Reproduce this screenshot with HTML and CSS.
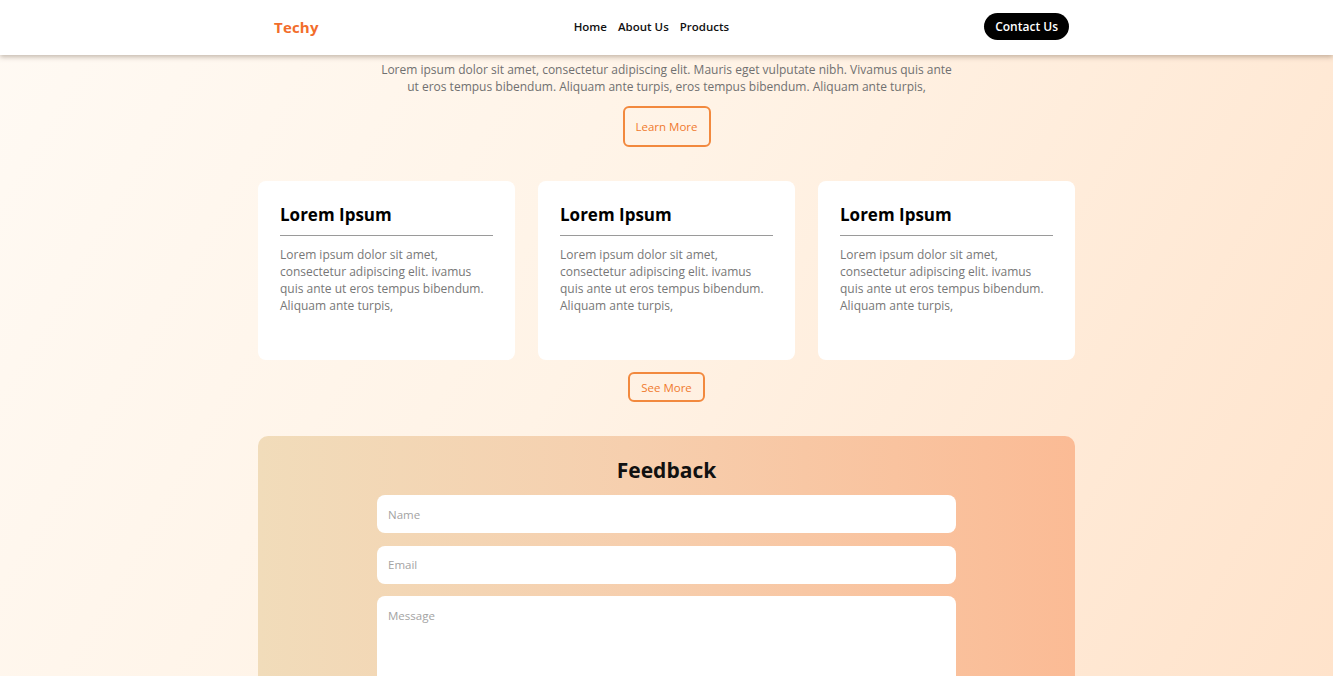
FILE: index.html
```html
<!DOCTYPE html>
<html lang="en">
<head>
<meta charset="utf-8">
<title>Techy</title>
<link rel="stylesheet" href="styles.css">
</head>
<body>
<header class="site-header">
  <div class="header-inner">
    <a class="logo" href="#">Techy</a>
    <nav class="nav">
      <a href="#">Home</a>
      <a href="#">About Us</a>
      <a href="#">Products</a>
    </nav>
    <a class="contact-btn" href="#">Contact Us</a>
  </div>
</header>
<main class="main">
  <section class="hero">
    <p class="hero-text">Lorem ipsum dolor sit amet, consectetur adipiscing elit. Mauris eget vulputate nibh. Vivamus quis ante ut eros tempus bibendum. Aliquam ante turpis, eros tempus bibendum. Aliquam ante turpis,</p>
    <a class="btn-outline btn-learn" href="#">Learn More</a>
  </section>
  <section class="cards">
    <article class="card">
      <h3 class="card-title">Lorem Ipsum</h3>
      <p class="card-text">Lorem ipsum dolor sit amet, consectetur adipiscing elit. ivamus quis ante ut eros tempus bibendum. Aliquam ante turpis,</p>
    </article>
    <article class="card">
      <h3 class="card-title">Lorem Ipsum</h3>
      <p class="card-text">Lorem ipsum dolor sit amet, consectetur adipiscing elit. ivamus quis ante ut eros tempus bibendum. Aliquam ante turpis,</p>
    </article>
    <article class="card">
      <h3 class="card-title">Lorem Ipsum</h3>
      <p class="card-text">Lorem ipsum dolor sit amet, consectetur adipiscing elit. ivamus quis ante ut eros tempus bibendum. Aliquam ante turpis,</p>
    </article>
  </section>
  <div class="see-more-row">
    <a class="btn-outline btn-see" href="#">See More</a>
  </div>
  <section class="feedback">
    <h2 class="feedback-title">Feedback</h2>
    <form class="feedback-form">
      <input class="field" type="text" placeholder="Name">
      <input class="field" type="email" placeholder="Email">
      <textarea class="field field-msg" placeholder="Message"></textarea>
    </form>
  </section>
</main>
</body>
</html>
```

FILE: styles.css
```css
* { box-sizing: border-box; }

html, body { margin: 0; padding: 0; }

body {
  font-family: "Open Sans", "DejaVu Sans", sans-serif;
  min-height: 100vh;
  background: linear-gradient(120deg, #fffaf4 0%, #fff3e6 45%, #ffe3cb 100%);
  background-attachment: fixed;
  color: #111;
}

a { text-decoration: none; }

.site-header {
  position: sticky;
  top: 0;
  z-index: 10;
  height: 55px;
  background: #fff;
  box-shadow: 0 2px 5px rgba(80, 60, 40, 0.35);
}

.header-inner {
  width: 817px;
  height: 100%;
  margin: 0 auto;
  padding: 0 6px 2px 16px;
  display: flex;
  align-items: center;
  justify-content: space-between;
}

.logo {
  color: #f26d2b;
  font-weight: 700;
  font-size: 15px;
  letter-spacing: 0.2px;
}

.nav {
  display: flex;
  gap: 11px;
}

.nav a {
  color: #111;
  font-size: 11.5px;
  font-weight: 600;
}

.contact-btn {
  background: #000;
  color: #fff;
  font-size: 12px;
  font-weight: 600;
  height: 27px;
  padding: 0 11px;
  border-radius: 14px;
  display: flex;
  align-items: center;
}

.main {
  width: 817px;
  margin: 0 auto;
  display: flex;
  flex-direction: column;
}

.hero {
  display: flex;
  flex-direction: column;
  align-items: center;
  padding-top: 6px;
}

.hero-text {
  margin: 0;
  width: 580px;
  text-align: center;
  font-size: 12px;
  line-height: 17px;
  color: #707070;
}

.btn-outline {
  display: flex;
  align-items: center;
  justify-content: center;
  border: 2px solid #f2893e;
  color: #f07a2e;
  font-size: 11.5px;
  border-radius: 6px;
}

.btn-learn {
  margin-top: 11px;
  width: 88px;
  height: 41px;
}

.cards {
  margin-top: 34px;
  display: grid;
  grid-template-columns: repeat(3, 1fr);
  gap: 23px;
}

.card {
  background: #fff;
  border-radius: 8px;
  height: 179px;
  padding: 20px 22px 0;
}

.card-title {
  margin: 0;
  font-size: 17px;
  font-weight: 700;
  line-height: 27px;
  padding-bottom: 7px;
  border-bottom: 1.5px solid #9a9a9a;
  color: #000;
}

.card-text {
  margin: 10px 0 0;
  font-size: 12px;
  line-height: 17px;
  color: #777;
}

.see-more-row {
  display: flex;
  justify-content: center;
  margin-top: 12px;
}

.btn-see {
  width: 77px;
  height: 30px;
}

.feedback {
  margin-top: 34px;
  border-radius: 10px;
  background: linear-gradient(90deg, #f1dcba 0%, #f6cfae 45%, #fbbb95 100%);
  padding: 18px 0 40px;
  display: flex;
  flex-direction: column;
  align-items: center;
}

.feedback-title {
  margin: 0;
  font-size: 21px;
  line-height: 33px;
  font-weight: 700;
  color: #111;
}

.feedback-form {
  margin-top: 8px;
  width: 579px;
  display: flex;
  flex-direction: column;
  gap: 12.5px;
}

.field {
  display: block;
  width: 100%;
  height: 38px;
  border: none;
  border-radius: 8px;
  background: #fff;
  padding: 0 11px;
  font-family: inherit;
  font-size: 11.5px;
  color: #333;
  outline: none;
}

.field::placeholder { color: #a3a3a3; }

.field-msg {
  height: 140px;
  padding-top: 12px;
  resize: none;
}
```
